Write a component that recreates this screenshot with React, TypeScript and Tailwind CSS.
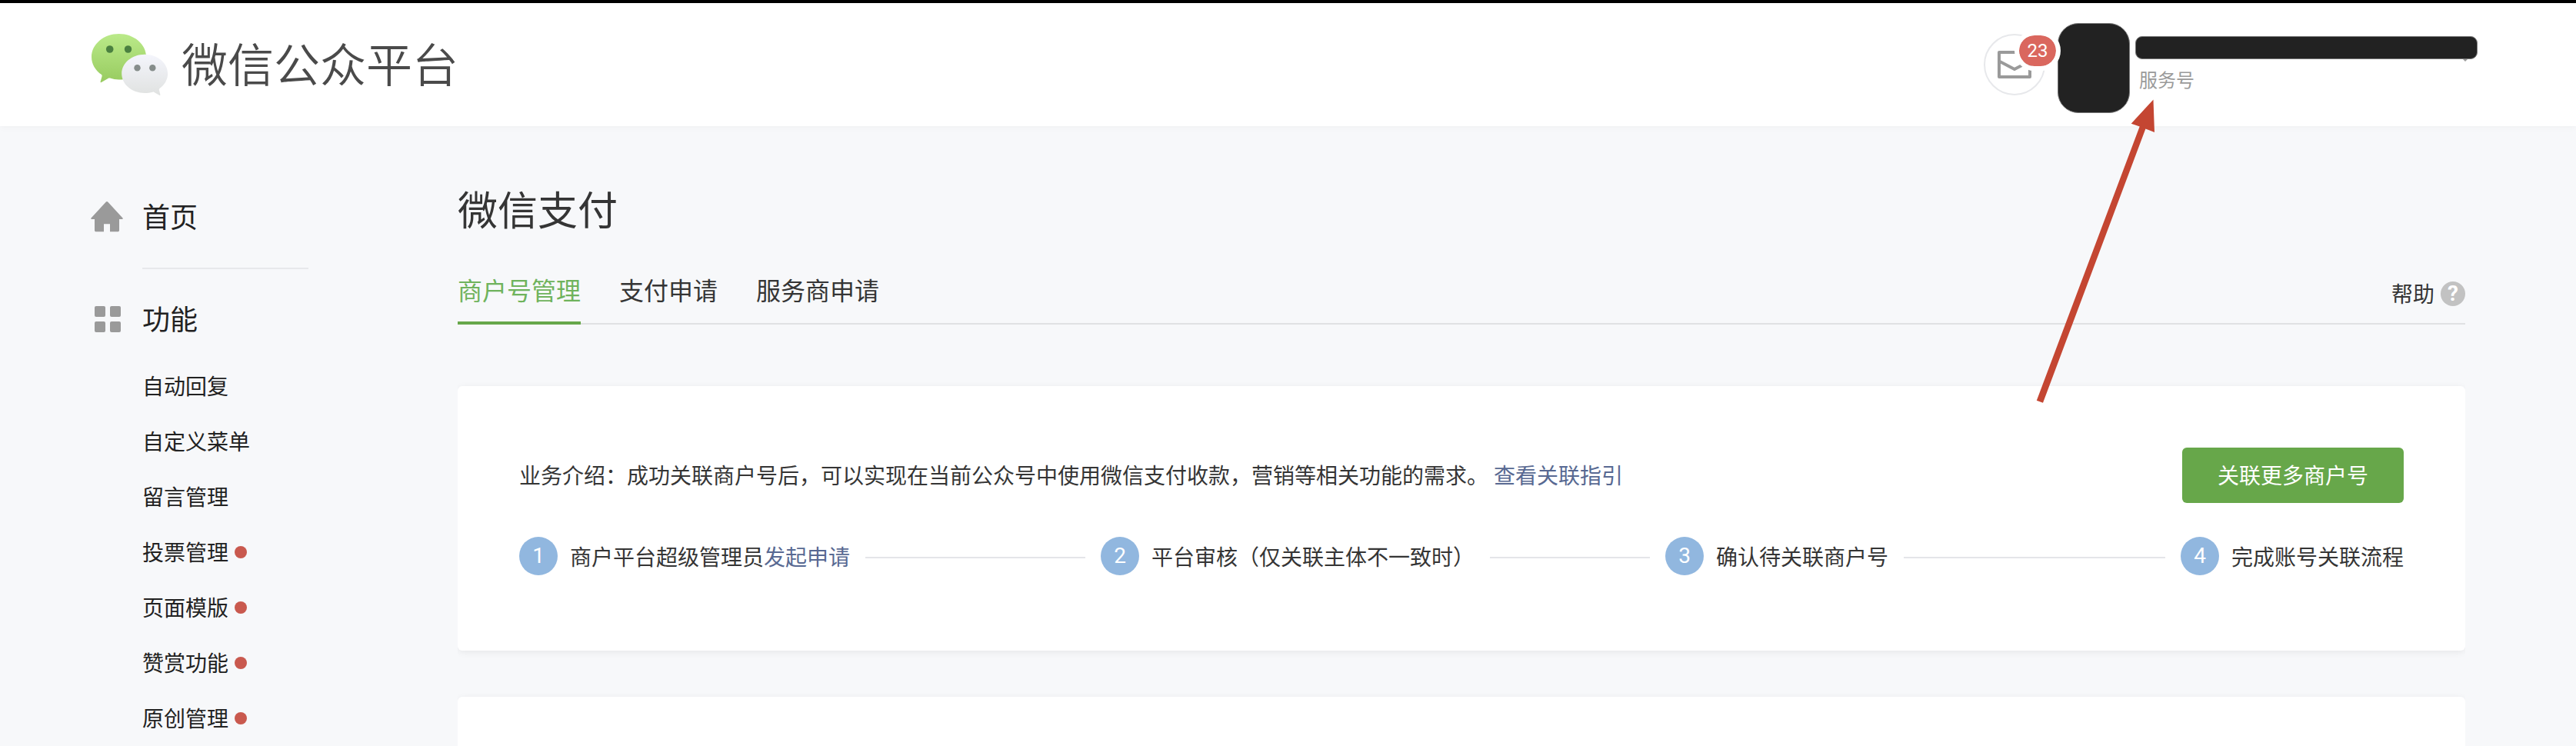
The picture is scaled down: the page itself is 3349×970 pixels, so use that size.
import { clsx } from "clsx";

type MenuItem = {
  label: string;
  dot?: boolean;
};

type Step = {
  text: string;
  link?: string;
  line?: string; // connector width after the step
};

const menu: MenuItem[] = [
  { label: "自动回复" },
  { label: "自定义菜单" },
  { label: "留言管理" },
  { label: "投票管理", dot: true },
  { label: "页面模版", dot: true },
  { label: "赞赏功能", dot: true },
  { label: "原创管理", dot: true },
];

const tabs = ["商户号管理", "支付申请", "服务商申请"];

const steps: Step[] = [
  { text: "商户平台超级管理员", link: "发起申请", line: "w-[286px]" },
  { text: "平台审核（仅关联主体不一致时）", line: "w-[208px]" },
  { text: "确认待关联商户号", line: "w-[340px]" },
  { text: "完成账号关联流程" },
];

export default function App() {
  return (
    <div
      lang="zh-CN"
      className="relative h-[970px] w-[3349px] overflow-hidden bg-[#f7f8fa] font-['Noto_Sans_CJK_SC',sans-serif] text-[#353535]"
    >
      <Header />
      <div className="flex">
        <Sidebar />
        <Main />
      </div>
      <Arrow />
    </div>
  );
}

function Header() {
  return (
    <header className="flex h-[164px] items-start border-t-4 border-black bg-white pl-[118px] shadow-[0_2px_8px_rgba(0,0,0,0.03)]">
      <Logo />
      <h1 className="mt-[33px] ml-[16px] text-[60px] leading-[88px] font-[350] whitespace-nowrap text-[#4a4a4a]">
        微信公众平台
      </h1>

      <div className="mr-[128px] ml-auto flex items-start">
        {/* inbox */}
        <div className="relative mt-10 flex h-20 w-20 items-center justify-center rounded-full border-2 border-[#e7e8eb]">
          <svg width="44" height="36" viewBox="0 0 44 36" fill="none" stroke="#9a9a9a" strokeWidth="4">
            <rect x="2" y="2" width="40" height="32" strokeLinejoin="round" />
            <path d="M2 13.5 22 24 42 13.5" />
          </svg>
          <span className="absolute top-[-6px] left-[38px] box-content flex h-10 w-12 items-center justify-center rounded-[26px] border-6 border-white bg-[#da675e] bg-clip-padding font-[Roboto,sans-serif] text-2xl text-white">
            23
          </span>
        </div>
        {/* avatar */}
        <div className="mt-[26px] ml-4 h-[117px] w-[94px] rounded-[27px] border border-[#777] bg-[#222]" />
        <div className="mt-[43px] ml-[7px]">
          <div className="relative h-[30px] w-[445px] rounded-[9px] border border-[#777] bg-[#222]">
            <span className="absolute top-[29px] right-3 h-[3px] w-[6px] bg-[#999] [clip-path:polygon(0_0,100%_0,50%_100%)]" />
          </div>
          <p className="mt-2 ml-[5px] text-2xl leading-9 text-[#9a9a9a]">服务号</p>
        </div>
      </div>
    </header>
  );
}

function Logo() {
  return (
    <svg className="mt-9 shrink-0" width="102" height="86" viewBox="118 40 102 86">
      <defs>
        <linearGradient id="green" x1="0" y1="0" x2="0" y2="1">
          <stop offset="0" stopColor="#baea89" />
          <stop offset="1" stopColor="#98cb60" />
        </linearGradient>
        <linearGradient id="white" x1="0" y1="0" x2="0" y2="1">
          <stop offset="0" stopColor="#f4f5fc" />
          <stop offset="1" stopColor="#e0e2e1" />
        </linearGradient>
      </defs>
      <path
        fill="url(#green)"
        d="M154.600 44C135 44 119 57.400 119 74c0 9.400 5 17.600 13 23.100.6.5.8 1.200.600 1.900l-2 7.200c-.2.8.5 1.200 1.200.8l8.700-5.100c.8-.5 1.600-.6 2.500-.3 3.600 1.200 7.500 2 11.600 2 19.600 0 35.500-13.300 35.500-29.700S174.200 44 154.600 44Z"
      />
      <ellipse cx="142.700" cy="64" rx="4.800" ry="4.800" fill="#4b8040" />
      <ellipse cx="166.500" cy="64" rx="4.700" ry="4.800" fill="#4b8040" />
      <path
        fill="url(#white)"
        d="M188.200 70.700c16.500 0 29.900 11.200 29.900 25 0 7.800-4.200 14.800-10.600 19.300-.6.4-.8 1-.6 1.700l1.500 6.600c.1.600-.4.900-.9.600l-7-4c-.6-.4-1.300-.4-2-.2-3.200.9-6.700 1.300-10.300 1.300-16.600 0-30-11.200-30-25.200s13.400-25.100 30-25.100Z"
      />
      <ellipse cx="178.500" cy="88.300" rx="4.200" ry="4.300" fill="#868d8b" />
      <ellipse cx="198.300" cy="88.300" rx="4.200" ry="4.300" fill="#868d8b" />
    </svg>
  );
}

function Sidebar() {
  return (
    <aside className="w-[595px] shrink-0 pt-[82px] pl-[118px] text-[#222]">
      <div className="flex h-[72px] items-center">
        <svg width="42" height="40" viewBox="0 0 42 40" fill="#9a9a9a">
          <path d="M19.600.7c.8-.9 2-.9 2.800 0L41.500 21.500c.5.600.2 1.500-.6 1.500H37v14.500c0 1-.8 1.800-1.800 1.800H25V29.300h-8v10H6.800c-1 0-1.800-.8-1.800-1.800V23H1.100c-.8 0-1.100-.9-.6-1.500Z" />
        </svg>
        <span className="ml-[25px] pb-1 text-4xl">首页</span>
      </div>
      <div className="mt-[30px] ml-[67px] h-[2px] w-[216px] bg-[#e7e8eb]" />

      <div className="mt-[29px] flex h-[72px] items-center">
        <div className="ml-[5px] grid grid-cols-2 gap-[6px]">
          {[0, 1, 2, 3].map((i) => (
            <span key={i} className="h-[14px] w-[14px] rounded-[2px] bg-[#9a9a9a]" />
          ))}
        </div>
        <span className="ml-7 pb-1 text-4xl">功能</span>
      </div>
      <ul className="mt-[15px] ml-[67px]">
        {menu.map((m) => (
          <li key={m.label} className="flex h-[72px] items-center text-[28px]">
            <span className="pb-[3px]">{m.label}</span>
            {m.dot && <i className="ml-2 h-4 w-4 rounded-full bg-[#c9594e]" />}
          </li>
        ))}
      </ul>
    </aside>
  );
}

function Main() {
  return (
    <main className="w-[2610px] pt-[69px]">
      <h2 className="text-[52px] leading-[76px]">微信支付</h2>

      <div className="mt-[31px] flex h-[82px] items-start justify-between border-b-2 border-[#e0e1e3]">
        <nav className="flex gap-[50px]">
          {tabs.map((t, i) => (
            <a
              key={t}
              className={clsx(
                "h-[82px] pt-[12px] text-[32px] leading-[48px]",
                i === 0 && "border-b-4 border-[#67a74a] text-[#6fb35c]"
              )}
            >
              {t}
            </a>
          ))}
        </nav>
        <a className="mt-[22px] flex h-10 items-center gap-2 text-[28px] leading-10">
          <span className="pb-[3px]">帮助</span>
          <span className="flex h-8 w-8 items-center justify-center rounded-full bg-[#c2c2c2] font-[Roboto,sans-serif] text-[28px] font-bold text-white">
            ?
          </span>
        </a>
      </div>

      <Card className="mt-20 h-[344px] px-20 pt-20">
        <div className="flex items-center justify-between">
          <p className="pb-[3px] text-[28px]">
            业务介绍：成功关联商户号后，可以实现在当前公众号中使用微信支付收款，营销等相关功能的需求。
            <a className="ml-[7px] text-[#586992]">查看关联指引</a>
          </p>
          <button className="h-[72px] w-[288px] rounded-md bg-[#67a74a] pb-[3px] text-[28px] text-white">
            关联更多商户号
          </button>
        </div>

        <ol className="mt-11 flex items-center text-[28px] whitespace-nowrap">
          {steps.map((s, i) => (
            <li key={s.text} className="flex items-center">
              <span className="flex h-[50px] w-[50px] items-center justify-center rounded-full bg-[#91b7df] font-[Roboto,sans-serif] text-white">
                {i + 1}
              </span>
              <span className="ml-4">
                {s.text}
                {s.link && <a className="text-[#586992]">{s.link}</a>}
              </span>
              {s.line && <span className={clsx("mx-5 mt-1 h-[2px] bg-[#e4e5e9]", s.line)} />}
            </li>
          ))}
        </ol>
      </Card>

      <Card className="mt-[60px] h-[344px]" />
    </main>
  );
}

function Card({ className, children }: { className?: string; children?: React.ReactNode }) {
  return (
    <section
      className={clsx(
        "rounded-md bg-white shadow-[0_2px_10px_rgba(0,0,0,0.07)] [clip-path:inset(-12px_0_-16px_0)]",
        className
      )}
    >
      {children}
    </section>
  );
}

// annotation pointing at the account type
function Arrow() {
  return (
    <svg
      className="pointer-events-none absolute top-[125px] left-[2640px]"
      width="170"
      height="405"
      viewBox="2640 125 170 405"
      fill="#c44632"
    >
      <path d="M2799.500 129.500 2801 172l-11.600-4.600L2656 523.800l-8.200-3L2781.700 164.500l-11-3.700Z" />
    </svg>
  );
}
